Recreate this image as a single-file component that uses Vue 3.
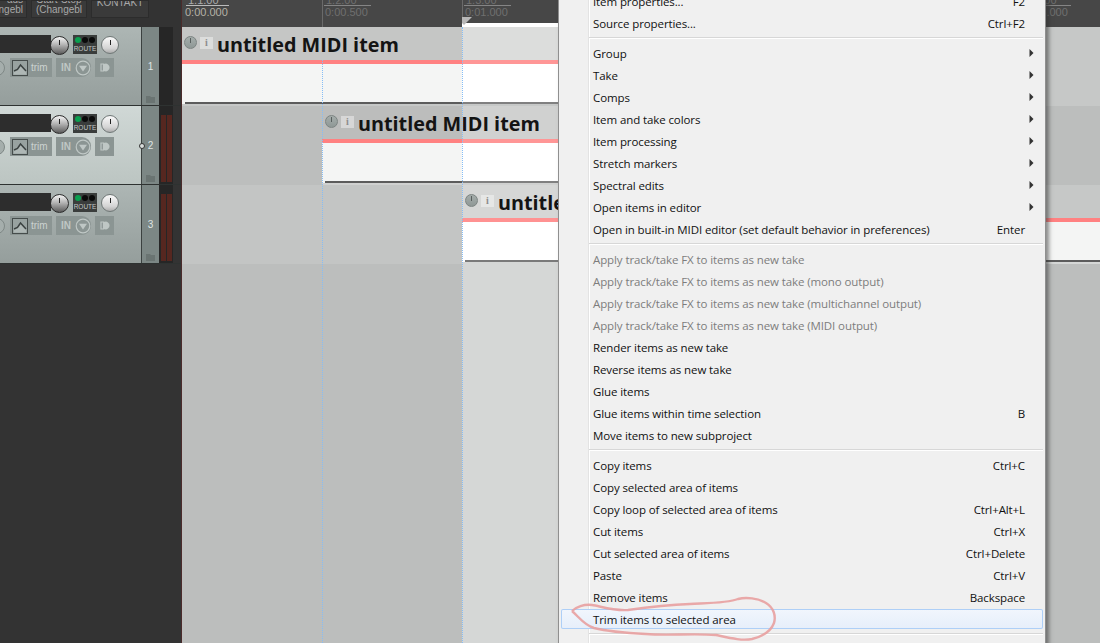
<script setup>
const tracks = [
  { n: 1, cls: 'plain', meter: false },
  { n: 2, cls: 'sel', meter: true },
  { n: 3, cls: 'plain', meter: true }
]
const ticks = [
  ['1.1.00', '0:00.000', 1], ['1.2.00', '0:00.500', 1], ['1.3.00', '0:01.000', 1], ['', '', 0],
  ['', '', 0], ['', '', 0], ['2.3.00', '0:03.000', 1]
]
const lanes = [
  { cls: 'l1', off: 0 },
  { cls: 'l2', off: 140 },
  { cls: 'l3', off: 280 }
]
const groups = [
  [['Item properties...', 'F2'], ['Source properties...', 'Ctrl+F2']],
  [['Group', '', 1], ['Take', '', 1], ['Comps', '', 1], ['Item and take colors', '', 1], ['Item processing', '', 1], ['Stretch markers', '', 1], ['Spectral edits', '', 1], ['Open items in editor', '', 1], ['Open in built-in MIDI editor (set default behavior in preferences)', 'Enter']],
  [['Apply track/take FX to items as new take', '', 0, 1], ['Apply track/take FX to items as new take (mono output)', '', 0, 1], ['Apply track/take FX to items as new take (multichannel output)', '', 0, 1], ['Apply track/take FX to items as new take (MIDI output)', '', 0, 1], ['Render items as new take'], ['Reverse items as new take'], ['Glue items'], ['Glue items within time selection', 'B'], ['Move items to new subproject']],
  [['Copy items', 'Ctrl+C'], ['Copy selected area of items'], ['Copy loop of selected area of items', 'Ctrl+Alt+L'], ['Cut items', 'Ctrl+X'], ['Cut selected area of items', 'Ctrl+Delete'], ['Paste', 'Ctrl+V'], ['Remove items', 'Backspace'], ['Trim items to selected area', '', 0, 0, 1]],
  []
]
</script>

<template>
  <div class="screen">
    <aside class="tcp">
      <div class="toolbar">
        <div class="tbtn b1"><span>aus</span><span>ngebl</span></div>
        <div class="tbtn b2"><span>Start-Stop</span><span>(Changebl</span></div>
        <div class="tbtn b3"><span>KONTAKT</span></div>
      </div>
      <div v-for="t in tracks" :key="t.n" class="track">
        <div class="panel" :class="t.cls">
          <div class="top-row">
            <div class="name"></div>
            <div class="knob dark"><i></i></div>
            <div class="route">
              <div class="dots"><b class="on"></b><b></b><b></b></div>
              <span>ROUTE</span>
            </div>
            <div class="knob light"><i></i></div>
          </div>
          <div class="ctl-row">
            <div class="rec"></div>
            <div class="trim">
              <svg width="16" height="16" viewBox="0 0 16 16"><rect x="0.5" y="0.5" width="15" height="15" fill="#98a2a0" stroke="#454c4b"/><path d="M2 11 L5.5 9.5 L8.5 5 L14 11 V14.5 H2 Z" fill="#aeb7b5"/><path d="M2 11 L5.5 9.5 L8.5 5 L14 11" fill="none" stroke="#3a4140" stroke-width="1.5"/></svg>
              <span>trim</span>
            </div>
            <div class="input">
              <span>IN</span>
              <svg width="16" height="16" viewBox="0 0 16 16"><circle cx="8" cy="8" r="6.8" fill="none" stroke="#bfc7c5" stroke-width="1.2"/><path d="M4 5.8 H12 L8 11.5 Z" fill="#bfc7c5"/></svg>
            </div>
            <div class="spk">
              <svg width="10" height="13" viewBox="0 0 10 13"><path d="M1 3 H3.5 V10 H1 Z" fill="none" stroke="#bfc7c5" stroke-width="1.2"/><path d="M3.5 3 L6 2.5 C8 3 9.5 4.5 9.5 6.5 C9.5 8.5 8 10 6 10.5 L3.5 10 Z" fill="#bfc7c5"/></svg>
            </div>
          </div>
          <div v-if="t.n === 2" class="node"></div>
        </div>
        <div class="num">
          <span>{{ t.n }}</span>
          <svg class="folder" width="9" height="7" viewBox="0 0 9 7"><path d="M0 0 H4 L5 1 H9 V7 H0 Z" fill="#6a7472"/></svg>
        </div>
        <div class="meter">
          <template v-if="t.meter"><u></u><u></u></template>
        </div>
      </div>
    </aside>

    <main class="arrange">
      <div class="ruler">
        <div v-for="(k, i) in ticks" :key="i" class="tick" :class="{ first: i === 0 }">
          <template v-if="k[2]">
            <div class="bar"><span>{{ k[0] }}</span></div>
            <div class="time">{{ k[1] }}</div>
          </template>
        </div>
        <div class="flag"></div>
      </div>
      <div v-for="l in lanes" :key="l.cls" class="lane" :class="l.cls">
        <div class="item" :style="{ marginLeft: l.off + 'px' }">
          <div class="head">
            <span class="pwr"></span>
            <span class="info">i</span>
            <span class="title">untitled MIDI item</span>
          </div>
          <div class="stripe"></div>
          <div class="body"></div>
          <div class="foot"></div>
        </div>
      </div>
      <div class="rest"></div>
      <div class="dot d1"></div>
      <div class="dot d2"></div>
    </main>

    <nav class="menu">
      <section v-for="(g, gi) in groups" :key="gi" class="grp">
        <div v-for="r in g" :key="r[0]" class="row" :class="{ off: r[3], hot: r[4] }">
          <span>{{ r[0] }}</span>
          <span v-if="r[1]" class="key">{{ r[1] }}</span>
          <svg v-if="r[2]" class="arrow" width="5" height="8" viewBox="0 0 5 8"><path d="M0.5 0 L4.5 4 L0.5 8 Z" fill="#333"/></svg>
        </div>
      </section>
    </nav>

    <svg class="scribble" width="1100" height="643" viewBox="0 0 1100 643">
      <path d="M572 611 C 576 607 584 604 592 605 C 600 606 612 611 628 610 C 650 607 668 605 690 604 C 710 603 728 603 738 599 C 746 597 758 598 766 603 C 774 608 776 616 774 623 C 771 631 764 636 752 639 C 742 641 730 638 716 635 C 692 633 668 636 646 634 C 626 633 606 631 594 628 C 584 625 579 617 572 611" fill="none" stroke="#e8a0a0" stroke-width="2.4" stroke-linejoin="round" opacity=".9"/>
    </svg>
  </div>
</template>

<style>
html, body { margin: 0; background: #333; }
</style>

<style scoped>
.screen { position: relative; width: 1100px; height: 643px; overflow: hidden; display: flex; background: #333; font-family: "Liberation Sans", sans-serif; }

.tcp { width: 182px; box-sizing: border-box; flex: none; background: #333; border-right: 1px solid #4a2b2b; }
.toolbar { height: 27px; display: flex; gap: 4px; margin-left: -2px; overflow: hidden; }
.tbtn { height: 18px; background: #3a3a3a; border: 1px solid #2c2c2c; box-sizing: border-box; color: #a8a8a8; font-size: 10px; line-height: 10px; display: flex; flex-direction: column; align-items: center; overflow: hidden; flex: none; }
.b1 { width: 29px; align-items: flex-end; padding-right: 3px; }
.b1 span:first-child { margin-top: -6px; }
.b2 { width: 56px; }
.b2 span:first-child { margin-top: -6px; }
.b3 { width: 58px; justify-content: flex-start; }
.b3 span { margin-top: -3px; }

.track { height: 79px; box-sizing: border-box; border-bottom: 1px solid #2e3231; display: flex; }
.panel { position: relative; flex: none; border-right: 1px solid #3b4140; display: flex; flex-direction: column; padding-top: 8px; box-sizing: border-box; width: 142px; }
.plain { background: linear-gradient(#adb6b4, #959e9c); }
.sel { background: linear-gradient(#d0d8d6, #bcc5c2); }
.top-row { display: flex; align-items: flex-start; height: 18px; }
.name { width: 51px; height: 18px; margin-right: -1px; background: #2d2d2d; flex: none; }
.knob { border-radius: 50%; position: relative; flex: none; box-sizing: border-box; }
.knob i { position: absolute; left: 8px; top: 3px; width: 1px; height: 5px; background: #222; }
.knob.dark { width: 19px; height: 19px; margin-top: 1px; background: linear-gradient(#f4f4f4, #b4b4b4 45%, #5c5c5c); border: 1px solid #2b2b2b; z-index: 1; }
.knob.light { width: 18px; height: 18px; margin-top: 1px; margin-left: 4px; background: linear-gradient(#fafafa, #d4d4d4 70%, #adadad); border: 1px solid #6f7776; }
.route { margin-left: 4px; width: 24px; height: 19px; background: #3a3d3c; display: flex; flex-direction: column; align-items: center; color: #c2c6c5; font-size: 6.5px; line-height: 8px; padding-top: 2px; box-sizing: border-box; }
.dots { display: flex; gap: 1px; height: 7px; }
.dots b { width: 6px; height: 6px; border-radius: 50%; background: #0a0a0a; }
.dots b.on { background: #0aa050; }
.route span { margin-top: 1px; }
.ctl-row { display: flex; align-items: center; height: 19px; margin-top: 5px; }
.rec { width: 16px; height: 16px; margin-left: -11px; border-radius: 50%; background: #a5aeac; border: 1px solid #7f8886; box-sizing: border-box; flex: none; }
.trim { margin-left: 5px; width: 42px; height: 19px; background: #8b9593; display: flex; align-items: center; padding-left: 2px; box-sizing: border-box; color: #ccd3d1; font-size: 10px; gap: 3px; flex: none; }
.input { margin-left: 4px; width: 35px; height: 19px; background: #8b9593; border-radius: 0 9px 9px 0; display: flex; align-items: center; padding-left: 5px; box-sizing: border-box; color: #bfc7c5; font-size: 10px; font-weight: 700; gap: 4px; flex: none; }
.spk { margin-left: 4px; width: 19px; height: 19px; background: #8b9593; display: flex; align-items: center; justify-content: center; flex: none; }
.node { position: absolute; right: -4px; top: 37px; width: 4px; height: 4px; border: 1px solid #333; border-radius: 50%; background: #d8dcdb; z-index: 2; }
.num { width: 17px; flex: none; background: #7c8785; color: #dfe4e3; font-size: 10px; position: relative; text-align: center; padding-top: 34px; box-sizing: border-box; }
.folder { position: absolute; left: 4px; bottom: 2px; }
.meter { width: 14px; flex: none; background: #262626; display: flex; gap: 1px; padding: 9px 1px 2px 2px; box-sizing: border-box; }
.meter u { display: block; width: 5px; background: #562720; }

.arrange { flex: 1; position: relative; min-width: 0; }
.ruler { height: 27px; background: #474747; display: flex; position: relative; }
.tick { width: 140px; flex: none; box-sizing: border-box; border-left: 1px solid #6a6a6a; color: #6f6f6f; font-size: 11px; padding-left: 2px; }
.tick.first { border-left-color: transparent; color: #aaa; }
.bar { height: 5px; width: 47px; border-bottom: 1px solid #858585; overflow: hidden; position: relative; margin-left: -1px; }
.tick.first .bar { width: 43px; border-bottom-color: #bbb; margin-left: 1px; }
.bar span { position: absolute; left: 2px; bottom: -1px; line-height: 11px; }
.time { line-height: 13px; }
.tick.first .time { color: #b5b1a6; }
.flag { position: absolute; left: 280px; width: 420px; top: 23px; height: 4px; background: #fff; }
.flag::before { content: ""; position: absolute; left: 0; top: -6px; border-top: 10px solid #b8b8b8; border-right: 10px solid transparent; }
.flag::after { content: ""; position: absolute; left: 0; top: 0; border-bottom: 4px solid #fff; border-right: 4px solid transparent; }

.lane { height: 79px; overflow: hidden; }
.l1 { background: #c6c8c7; }
.l2 { background: linear-gradient(to right, #bcbebd 140px, #d0d1d0 140px, #d0d1d0 700px, #bcbebd 700px); }
.l3 { background: linear-gradient(to right, #c3c5c4 280px, #d5d7d6 280px); }
.l1 .item { width: 700px; }
.l2 .item { width: 560px; }
.item { height: 75px; }
.head { height: 33px; display: flex; align-items: center; padding-left: 2px; overflow: hidden; white-space: nowrap; }
.l2 .head, .l3 .head { padding-left: 3px; }
.l1 .head { background: linear-gradient(to right, #c5c6c5 280px, #dcdddc 280px); }
.l2 .head { background: linear-gradient(to right, #bcbdbc 140px, #d0d1d0 140px); }
.l3 .head { background: linear-gradient(to right, #d6d7d6 420px, #c6c8c7 420px); }
.pwr { width: 13px; height: 13px; border-radius: 50%; background: linear-gradient(#a5adab, #8f9896); border: 1px solid #7c8482; box-sizing: border-box; flex: none; margin-top: -2px; position: relative; }
.pwr::after { content: ""; position: absolute; left: 5px; top: 1px; width: 1px; height: 5px; background: #59605f; }
.info { width: 13px; height: 12px; margin-left: 3px; background: rgba(255,255,255,.4); color: #8c8c8c; font-family: "Liberation Serif", serif; font-weight: 700; font-size: 10px; line-height: 12px; text-align: center; flex: none; margin-top: -2px; }
.title { margin-left: 4px; margin-top: 2px; font-family: "Open Sans", sans-serif; font-weight: 700; font-size: 19.8px; line-height: 30px; color: #141414; }
.l3 .title { max-width: 60px; overflow: hidden; }
.stripe { height: 4px; }
.l1 .stripe { background: linear-gradient(to right, #ff8181 280px, #ff9696 280px); }
.l2 .stripe { background: linear-gradient(to right, #ff8181 140px, #ff9696 140px); }
.l3 .stripe { background: linear-gradient(to right, #ff9292 420px, #ff8181 420px); }
.body { height: 38px; }
.l1 .body { background: linear-gradient(to right, #f4f5f4 280px, #fff 280px); }
.l2 .body { background: linear-gradient(to right, #f4f5f4 140px, #fff 140px); }
.l3 .body { background: linear-gradient(to right, #fff 420px, #f4f5f4 420px); }
.foot { height: 2px; box-sizing: border-box; }
.l1 .foot { border-left: 3px solid #f4f5f4; background: linear-gradient(to right, #5c5c5c 277px, #808080 277px); }
.l2 .foot { border-left: 3px solid #f4f5f4; background: linear-gradient(to right, #5c5c5c 137px, #808080 137px); }
.l3 .foot { border-left: 3px solid #fff; background: linear-gradient(to right, #7a7a7a 417px, #5c5c5c 417px); }
.rest { height: 379px; background: linear-gradient(to right, #bcbebd 280px, #d5d7d6 280px, #d5d7d6 700px, #bcbebd 700px); }
.dot { position: absolute; width: 0; bottom: 0; border-left: 1px dotted #86bdf5; }
.d1 { left: 140px; top: 60px; }
.d2 { left: 280px; top: 27px; }

.menu { position: absolute; left: 558px; top: -14px; width: 488px; height: 700px; box-sizing: border-box; border: 1px solid #8f8f8f; padding: 3px 2px; background: linear-gradient(to right, #f0f0f0 29px, #e3e3e3 29px, #e3e3e3 30px, #fff 30px, #fff 31px, #f0f0f0 31px); box-shadow: 3px 0 4px rgba(50,50,50,.55); font-family: "Open Sans", sans-serif; font-size: 11.5px; letter-spacing: -0.1px; color: #111; }
.grp { display: flex; flex-direction: column; }
.grp + .grp { position: relative; padding-top: 8px; }
.grp + .grp::before { content: ""; position: absolute; left: 28px; right: 0; top: 3px; height: 1px; background: #d7d7d7; border-bottom: 1px solid #fff; }
.row { height: 22px; display: flex; align-items: center; justify-content: space-between; padding: 0 18px 0 32px; position: relative; box-sizing: border-box; white-space: nowrap; }
.row.off { color: #7d7d7d; }
.row.hot { background: linear-gradient(#f1f6fd, #e6eefa); box-shadow: inset 0 0 0 1px #aecff7; border-radius: 2px; margin: 1px 0; height: 20px; }
.arrow { position: absolute; right: 9px; top: 7px; }
.scribble { position: absolute; left: 0; top: 0; pointer-events: none; }
</style>
